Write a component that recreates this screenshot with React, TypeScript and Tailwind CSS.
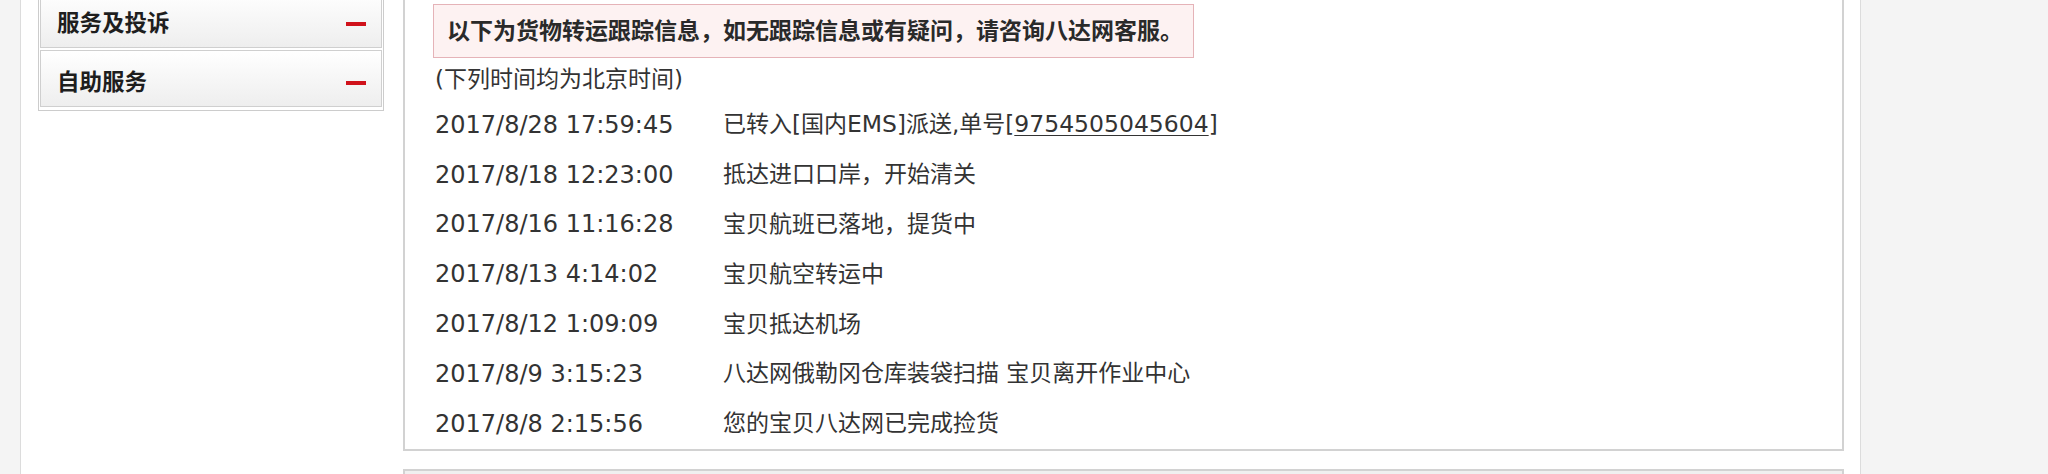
import React from "react";

const rows: { t: string; d: React.ReactNode }[] = [
  {
    t: "2017/8/28 17:59:45",
    d: (
      <>
        已转入[国内<span className="text-[23.5px]">EMS</span>]派送,单号[
        <span className="underline underline-offset-[3px] decoration-1 text-[23.5px]">9754505045604</span>]
      </>
    ),
  },
  { t: "2017/8/18 12:23:00", d: "抵达进口口岸，开始清关" },
  { t: "2017/8/16 11:16:28", d: "宝贝航班已落地，提货中" },
  { t: "2017/8/13 4:14:02", d: "宝贝航空转运中" },
  { t: "2017/8/12 1:09:09", d: "宝贝抵达机场" },
  { t: "2017/8/9 3:15:23", d: "八达网俄勒冈仓库装袋扫描 宝贝离开作业中心" },
  { t: "2017/8/8 2:15:56", d: "您的宝贝八达网已完成捡货" },
];

function SideItem({ label }: { label: string }) {
  return (
    <div className="h-[57px] border border-[#cfcfcf] bg-gradient-to-b from-[#ffffff] to-[#eeeeee] flex items-center justify-between pl-[16px] pr-[15px]">
      <span className="font-bold text-[22.5px] leading-none text-[#1e1e1e] pt-[8px]">{label}</span>
      <span className="block w-[20px] h-[4px] bg-[#d0121b] mt-[8px]" />
    </div>
  );
}

export default function App() {
  return (
    <div
      className="h-[474px] overflow-hidden bg-[#f4f4f4] pl-[20px] flex"
      style={{ fontFamily: "'DejaVu Sans','Noto Sans CJK SC',sans-serif" }}
    >
      <div className="w-[1841px] h-[474px] shrink-0 bg-white border-x border-[#dcdcdc] pl-[17px] flex items-start">
        {/* sidebar */}
        <div className="w-[346px] shrink-0 -mt-[10px] border border-t-0 border-[#cccccc] p-[1px] pb-[3px] flex flex-col gap-[2px]">
          <SideItem label="服务及投诉" />
          <SideItem label="自助服务" />
        </div>

        {/* tracking column */}
        <div className="w-[1441px] shrink-0 ml-[19px] -mt-[20px] flex flex-col">
          <div className="border-2 border-[#d2d2d2] pt-[22px] pl-[28px]">
            <div className="w-[761px] h-[54px] border border-[#e5b3b8] bg-[#fdf2f2] flex items-center pl-[13px]">
              <span className="font-bold text-[23px] leading-none text-[#2a2a2a]">
                以下为货物转运跟踪信息，如无跟踪信息或有疑问，请咨询八达网客服。
              </span>
            </div>
            <div className="h-[42px] pt-[7px] pl-[2px]">
              <div className="text-[23px] leading-[28px] text-[#333333]">(下列时间均为北京时间)</div>
            </div>
            <div className="flex flex-col pl-[2px]">
              {rows.map((r) => (
                <div key={r.t} className="h-[49.8px] flex items-center leading-none text-[#333333]">
                  <span className="w-[288px] shrink-0 text-[24px]">{r.t}</span>
                  <span className="text-[23px]">{r.d}</span>
                </div>
              ))}
            </div>
          </div>
          <div className="mt-[18px] h-[40px] border-2 border-[#d2d2d2] bg-[#f0f0f0]" />
        </div>
      </div>
    </div>
  );
}
